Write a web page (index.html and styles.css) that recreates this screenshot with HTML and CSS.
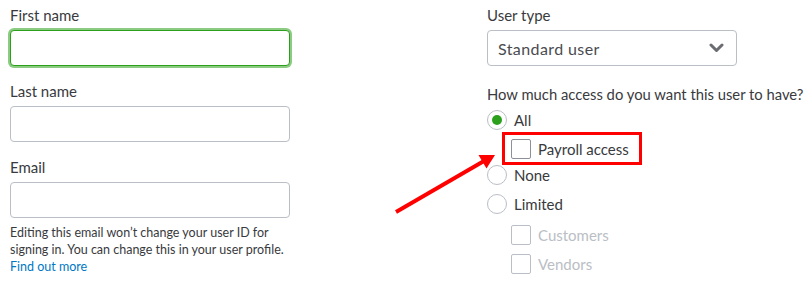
FILE: index.html
```html
<!DOCTYPE html>
<html lang="en">
<head>
    <meta charset="UTF-8">
    <title>Add user</title>
    <link rel="stylesheet" href="styles.css">
</head>
<body>
<div id="app">
    <form class="user-form">
        <div class="col col-left">
            <div class="field">
                <label class="field-label" for="first_name">First name</label>
                <input id="first_name" class="input input-focus"/>
            </div>
            <div class="field">
                <label class="field-label" for="last_name">Last name</label>
                <input id="last_name" class="input"/>
            </div>
            <div class="field">
                <label class="field-label" for="email">Email</label>
                <input id="email" class="input"/>
                <p class="help">Editing this email won’t change your user ID for signing in. You can change this in your user profile.<br><a href="#" class="link">Find out more</a></p>
            </div>
        </div>
        <div class="col col-right">
            <div class="field">
                <span class="field-label">User type</span>
                <div class="select">
                    <span>Standard user</span>
                    <svg class="chevron" width="15" height="10" viewBox="0 0 15 10">
                        <path d="M2 2 L7.5 7.5 L13 2" fill="none" stroke="#6b6c72" stroke-width="3" stroke-linecap="round" stroke-linejoin="round"/>
                    </svg>
                </div>
            </div>
            <div class="access">
                <span class="field-label question">How much access do you want this user to have?</span>
                <div class="option">
                    <span class="radio checked"></span>
                    <span>All</span>
                </div>
                <div class="option option-sub highlight">
                    <span class="check"></span>
                    <span>Payroll access</span>
                </div>
                <div class="option">
                    <span class="radio"></span>
                    <span>None</span>
                </div>
                <div class="option">
                    <span class="radio"></span>
                    <span>Limited</span>
                </div>
                <div class="sub-list">
                    <div class="option disabled">
                        <span class="check"></span>
                        <span>Customers</span>
                    </div>
                    <div class="option disabled">
                        <span class="check"></span>
                        <span>Vendors</span>
                    </div>
                </div>
            </div>
        </div>
    </form>
    <svg class="arrow" width="811" height="287" viewBox="0 0 811 287">
        <line x1="396" y1="212" x2="484" y2="161" stroke="#f00" stroke-width="4"/>
        <polygon points="495,155 486.5,168.5 478.5,155" fill="#f00"/>
    </svg>
</div>
</body>
</html>
```

FILE: styles.css
```css
* {
    box-sizing: border-box;
    margin: 0;
    padding: 0;
}

body {
    font-family: Lato, "Liberation Sans", sans-serif;
    color: #393a3d;
    background: #fff;
}

#app {
    position: relative;
    width: 811px;
    height: 287px;
    overflow: hidden;
}

.user-form {
    display: grid;
    grid-template-columns: 280px 320px;
    column-gap: 197px;
    padding: 5px 0 0 10px;
}

.col {
    display: flex;
    flex-direction: column;
    gap: 15px;
}

.col-right {
    width: 250px;
}

.field {
    display: flex;
    flex-direction: column;
    gap: 5px;
}

.field-label {
    font-size: 15px;
    line-height: 20px;
    color: #393a3d;
    white-space: nowrap;
}

.field-label.question {
    font-size: 14.8px;
}

.input {
    height: 36px;
    width: 100%;
    border: 1px solid #babec5;
    border-radius: 4px;
    font: inherit;
    outline: none;
}

.input-focus {
    border-color: #2ca01c;
    box-shadow: 0 0 0 2px rgba(44, 160, 28, 0.55);
}

.help {
    margin-top: 1px;
    font-size: 12.5px;
    line-height: 17px;
    color: #393a3d;
}

.link {
    color: #0077c5;
    text-decoration: none;
}

.select {
    display: flex;
    align-items: center;
    justify-content: space-between;
    height: 36px;
    padding: 0 12px 0 10px;
    border: 1px solid #babec5;
    border-radius: 4px;
    font-size: 16px;
    letter-spacing: 0.4px;
    color: #4a4b4f;
}

.access {
    display: flex;
    flex-direction: column;
    margin-top: 3px;
}

.access .field-label {
    margin-bottom: 6px;
}

.option {
    display: flex;
    align-items: center;
    gap: 7px;
    height: 20px;
    font-size: 15px;
    margin-bottom: 9px;
}

.radio {
    width: 20px;
    height: 20px;
    border: 1px solid #babec5;
    border-radius: 50%;
    display: flex;
    align-items: center;
    justify-content: center;
}

.radio.checked::after {
    content: "";
    width: 10px;
    height: 10px;
    border-radius: 50%;
    background: #2ca01c;
}

.check {
    width: 20px;
    height: 20px;
    border: 1px solid #8d9096;
    border-radius: 2px;
}

.option-sub {
    margin: -7px 0 0 15px;
    align-self: flex-start;
}

.highlight {
    height: 33px;
    padding: 0 10px 0 6px;
    border: 3px solid #f00;
}

.sub-list {
    margin: 2px 0 0 24px;
}

.sub-list .option {
    margin-bottom: 9px;
}

.disabled {
    color: #babec5;
}

.disabled .check {
    border-color: #babec5;
}

.arrow {
    position: absolute;
    left: 0;
    top: 0;
    pointer-events: none;
}
```
